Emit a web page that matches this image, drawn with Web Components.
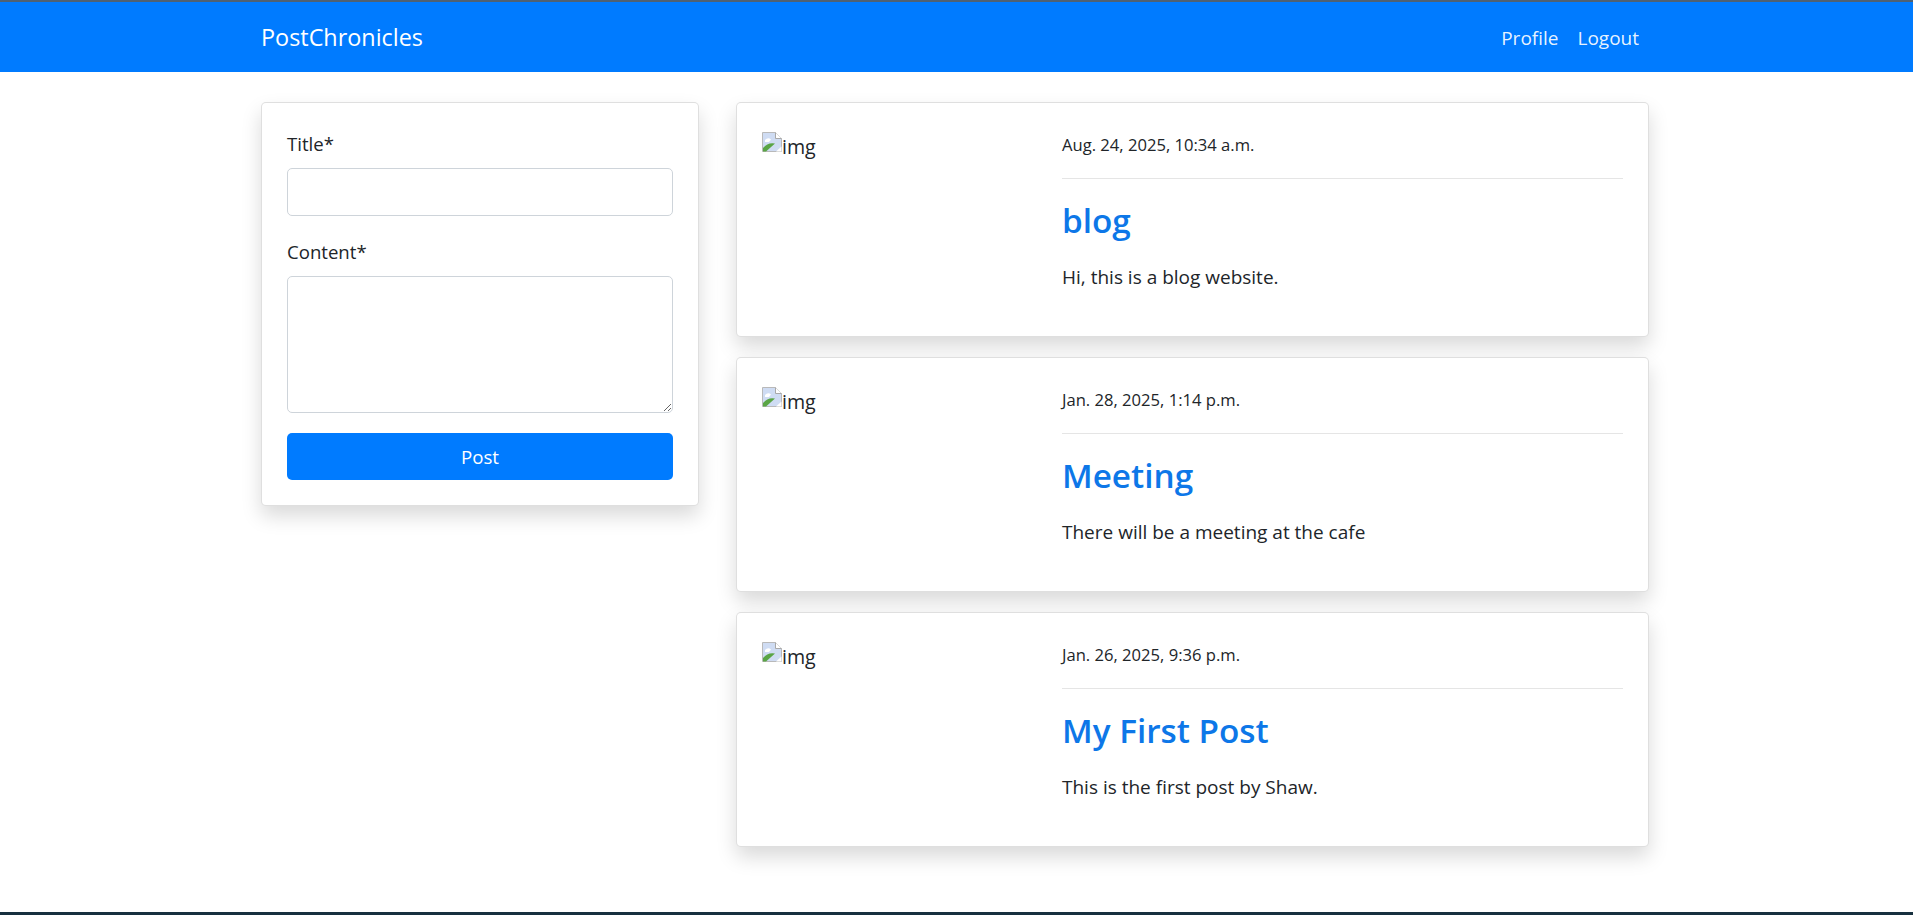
<!DOCTYPE html>
<html lang="en"><head><meta charset="utf-8"><title>PostChronicles</title>
<style>
html,body{margin:0;padding:0;height:100%;background:#fff}
body{font-family:"Open Sans","Liberation Sans",sans-serif;color:#212529}
</style></head><body>
<pc-app>
<pc-navbar slot="nav" brand="PostChronicles">
  <pc-navlink>Profile</pc-navlink><pc-navlink>Logout</pc-navlink>
</pc-navbar>
<pc-form slot="side"></pc-form>
<pc-post date="Aug. 24, 2025, 10:34 a.m." title="blog">Hi, this is a blog website.</pc-post>
<pc-post date="Jan. 28, 2025, 1:14 p.m." title="Meeting">There will be a meeting at the cafe</pc-post>
<pc-post date="Jan. 26, 2025, 9:36 p.m." title="My First Post">This is the first post by Shaw.</pc-post>
</pc-app>
<script>
function def(name,html,init){customElements.define(name,class extends HTMLElement{
  constructor(){super();this.attachShadow({mode:'open'}).innerHTML=html;}
  connectedCallback(){if(init)init(this,this.shadowRoot);}
});}
def('pc-app',`<style>
:host{display:flex;flex-direction:column;height:915px;box-sizing:border-box;border-top:2px solid #4f6172;border-bottom:3px solid #17303f;overflow:hidden}
main{flex:1;display:flex;gap:37px;padding:30px 264px 0 261px;align-items:flex-start}
aside{flex:0 0 438px}
section{flex:1;display:flex;flex-direction:column;gap:20px}
</style><slot name="nav"></slot><main><aside><slot name="side"></slot></aside><section><slot></slot></section></main>`);
def('pc-navbar',`<style>
:host{display:flex;align-items:center;justify-content:space-between;height:70px;background:#007bff;padding:0 265px 0 261px;box-sizing:border-box;flex:none}
.b{color:#fff;font-size:23.4px}
nav{display:flex;gap:19px;padding:1px 9px 0 0}
</style><span class="b"></span><nav><slot></slot></nav>`,(h,s)=>{s.querySelector('.b').textContent=h.getAttribute('brand')});
def('pc-navlink',`<style>:host{display:block;color:rgba(255,255,255,.92);font-size:19px}</style><slot></slot>`);
def('pc-form',`<style>
:host{display:block;box-sizing:border-box;background:#fff;border:1px solid rgba(0,0,0,.125);border-radius:5px;box-shadow:0 10px 20px rgba(0,0,0,.15);padding:26px 25px 25px}
label{display:block;font-size:18.6px;line-height:30px;height:30px;margin-bottom:9px}
.f{display:block;box-sizing:border-box;width:100%;border:1px solid #ced4da;border-radius:5px;background:#fff;margin:0;font:inherit}
input.f{height:48px;margin-bottom:21px}
textarea.f{height:137px;margin-bottom:20px;resize:vertical}
button{display:block;width:100%;height:47px;border:0;border-radius:5px;background:#007bff;color:#fff;font:inherit;font-size:18.7px;padding:0}
</style><label>Title*</label><input class="f"><label>Content*</label><textarea class="f"></textarea><button>Post</button>`);
def('pc-post',`<style>
:host{display:flex;box-sizing:border-box;height:235px;background:#fff;border:1px solid rgba(0,0,0,.125);border-radius:5px;box-shadow:0 10px 20px rgba(0,0,0,.15);padding:25px}
.i{flex:0 0 300px;font-size:19.6px;line-height:30px;display:flex;align-items:flex-start;height:30px;padding-top:4px}
.i svg{flex:none;margin-top:0}
.c{flex:1;min-width:0}
.d{font-size:16.6px;line-height:26px;height:26px;margin-top:4px}
hr{border:0;border-top:1px solid rgba(0,0,0,.1);margin:20px 0 0}
h2{margin:17px 0 0;font-size:33.3px;font-weight:600;line-height:48px;color:#0d77e8}
p{margin:18px 0 0;font-size:19px;line-height:30px}
</style><div class="i"><svg width="20" height="20" viewBox="0 0 20 20"><path d="M.5.5H13.5L19.5 6.500V19.500H.5Z" fill="#cfdcf3" stroke="#b9b9b9"/><path d="M13.5.5V6.500H19.500" fill="#fff" stroke="#a8a8a8"/><path d="M3 8q3-3 6-.5l-2 2.500H3Z" fill="#fff"/><path d="M1 19.500V16q5-6 12-4.500L4 19.500Z" fill="#5aa545"/><path d="M14 19.500l5.500-5v5Z" fill="#fff"/></svg><span>img</span></div>
<div class="c"><div class="d"></div><hr><h2></h2><p><slot></slot></p></div>`,(h,s)=>{s.querySelector('.d').textContent=h.getAttribute('date');s.querySelector('h2').textContent=h.getAttribute('title')});
</script>
</body></html>
